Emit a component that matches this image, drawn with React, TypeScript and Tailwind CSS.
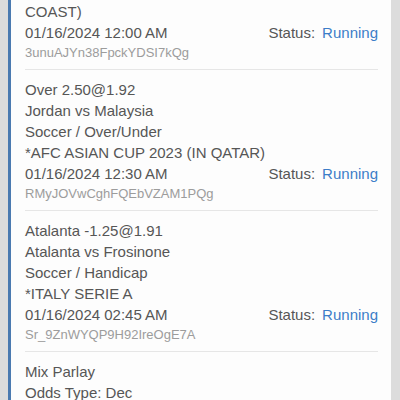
const bets = [
  {
    lines: ["COAST)"],
    date: "01/16/2024 12:00 AM",
    ref: "3unuAJYn38FpckYDSI7kQg",
  },
  {
    lines: [
      "Over 2.50@1.92",
      "Jordan vs Malaysia",
      "Soccer / Over/Under",
      "*AFC ASIAN CUP 2023 (IN QATAR)",
    ],
    date: "01/16/2024 12:30 AM",
    ref: "RMyJOVwCghFQEbVZAM1PQg",
  },
  {
    lines: [
      "Atalanta -1.25@1.91",
      "Atalanta vs Frosinone",
      "Soccer / Handicap",
      "*ITALY SERIE A",
    ],
    date: "01/16/2024 02:45 AM",
    ref: "Sr_9ZnWYQP9H92IreOgE7A",
  },
];

const App = () => {
  return (
    <div
      className="h-[400px] overflow-hidden bg-[#dcdcdc] pl-2 pr-[9px]"
      style={{ fontFamily: '"Liberation Sans", Arial, sans-serif' }}
    >
      <div className="h-full border-l-[3px] border-[#4a7ab0] bg-[#fdfdfd] pl-[14px] pr-[13px]">
        {bets.map((bet, index) => (
          <div
            key={index}
            className={`border-b border-[#e6e6e6] pb-[7px] ${index === 0 ? "pt-[1px]" : "pt-[9px]"}`}
          >
            {bet.lines.map((line) => (
              <div key={line} className="text-[15px] leading-[21px] text-[#565656]">
                {line}
              </div>
            ))}
            <div className="flex justify-between text-[15px] leading-[21px] text-[#565656]">
              <span>{bet.date}</span>
              <span>
                Status:<span className="ml-[7px] text-[#3c7dc8]">Running</span>
              </span>
            </div>
            <div className="text-[13px] leading-[19px] text-[#9c9c9c]">{bet.ref}</div>
          </div>
        ))}

        {/* Mix parlay entry */}
        <div className="pt-[9px]">
          <div className="text-[15px] leading-[21px] text-[#565656]">Mix Parlay</div>
          <div className="text-[15px] leading-[21px] text-[#565656]">Odds Type: Dec</div>
        </div>
      </div>
    </div>
  );
};

export default App;
